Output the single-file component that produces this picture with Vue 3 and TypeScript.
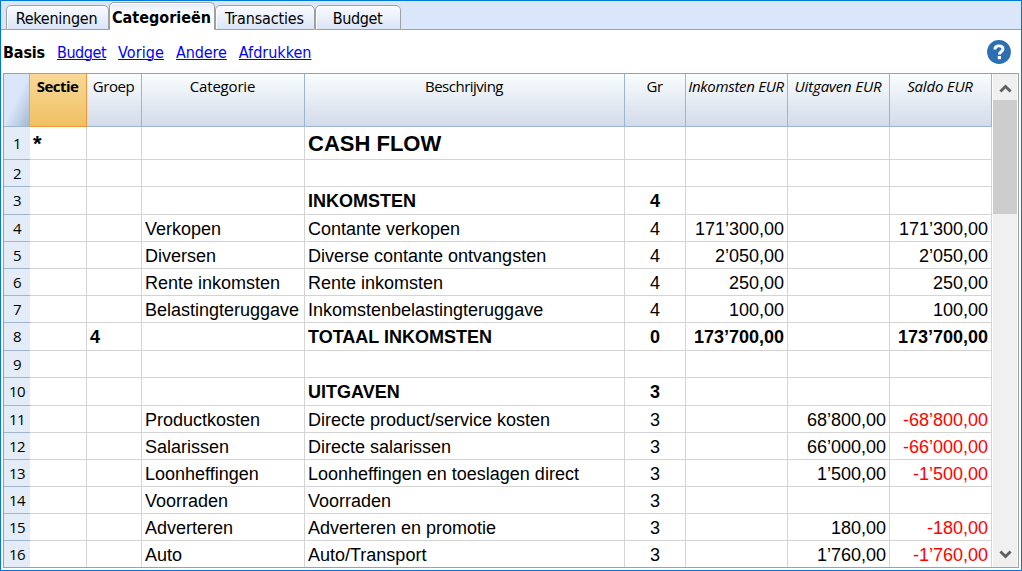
<script setup lang="ts">
interface Row {
  n: number
  kind?: 'title' | 'bold'
  tall?: boolean
  sectie?: string
  groep?: string
  cat?: string
  desc?: string
  gr?: string
  ink?: string
  uit?: string
  saldo?: string
}

const tabs = [
  { key: 'rekeningen', label: 'Rekeningen' },
  { key: 'categorieen', label: 'Categorieën', active: true },
  { key: 'transacties', label: 'Transacties' },
  { key: 'budget', label: 'Budget' },
]

const views = [
  { key: 'l-budget', label: 'Budget' },
  { key: 'l-vorige', label: 'Vorige' },
  { key: 'l-andere', label: 'Andere' },
  { key: 'l-afdrukken', label: 'Afdrukken' },
]

const columns = [
  { key: 'c-sectie', label: 'Sectie' },
  { key: 'c-groep', label: 'Groep' },
  { key: 'c-cat', label: 'Categorie' },
  { key: 'c-desc', label: 'Beschrijving' },
  { key: 'c-gr', label: 'Gr' },
  { key: 'c-ink', label: 'Inkomsten EUR' },
  { key: 'c-uit', label: 'Uitgaven EUR' },
  { key: 'c-saldo', label: 'Saldo EUR' },
]

const rows: Row[] = [
  { n: 1, kind: 'title', sectie: '*', desc: 'CASH FLOW' },
  { n: 2 },
  { n: 3, kind: 'bold', tall: true, desc: 'INKOMSTEN', gr: '4' },
  { n: 4, cat: 'Verkopen', desc: 'Contante verkopen', gr: '4', ink: '171’300,00', saldo: '171’300,00' },
  { n: 5, cat: 'Diversen', desc: 'Diverse contante ontvangsten', gr: '4', ink: '2’050,00', saldo: '2’050,00' },
  { n: 6, cat: 'Rente inkomsten', desc: 'Rente inkomsten', gr: '4', ink: '250,00', saldo: '250,00' },
  { n: 7, cat: 'Belastingteruggave', desc: 'Inkomstenbelastingteruggave', gr: '4', ink: '100,00', saldo: '100,00' },
  { n: 8, kind: 'bold', tall: true, groep: '4', desc: 'TOTAAL INKOMSTEN', gr: '0', ink: '173’700,00', saldo: '173’700,00' },
  { n: 9 },
  { n: 10, kind: 'bold', tall: true, desc: 'UITGAVEN', gr: '3' },
  { n: 11, cat: 'Productkosten', desc: 'Directe product/service kosten', gr: '3', uit: '68’800,00', saldo: '-68’800,00' },
  { n: 12, cat: 'Salarissen', desc: 'Directe salarissen', gr: '3', uit: '66’000,00', saldo: '-66’000,00' },
  { n: 13, cat: 'Loonheffingen', desc: 'Loonheffingen en toeslagen direct', gr: '3', uit: '1’500,00', saldo: '-1’500,00' },
  { n: 14, cat: 'Voorraden', desc: 'Voorraden', gr: '3' },
  { n: 15, cat: 'Adverteren', desc: 'Adverteren en promotie', gr: '3', uit: '180,00', saldo: '-180,00' },
  { n: 16, cat: 'Auto', desc: 'Auto/Transport', gr: '3', uit: '1’760,00', saldo: '-1’760,00' },
]
</script>

<template>
  <div class="window">
    <nav class="tabs">
      <div v-for="t in tabs" :key="t.key" class="tab" :class="[t.key, { active: t.active }]">
        <span>{{ t.label }}</span>
      </div>
      <div class="rest"></div>
    </nav>

    <div class="views">
      <b>Basis</b>
      <a v-for="v in views" :key="v.key" :class="v.key">{{ v.label }}</a>
      <svg class="help" width="24" height="24" viewBox="0 0 24 24">
        <circle cx="12" cy="12" r="11.9" fill="#2c6fb3" />
        <path d="M7.9 9.4C7.9 6.9 9.7 5.9 12 5.9s4 1.1 4 3.1c0 2.7-3.6 2.8-3.6 5.4" fill="none" stroke="#fff" stroke-width="2.9" />
        <rect x="10.8" y="16" width="3.2" height="3.2" fill="#fff" />
      </svg>
    </div>

    <div class="sheet">
      <div class="grid">
        <div class="row head">
          <div class="corner"></div>
          <div v-for="c in columns" :key="c.key" class="th" :class="c.key"><span>{{ c.label }}</span></div>
        </div>
        <div v-for="r in rows" :key="r.n" class="row" :class="[r.kind, { tall: r.tall }]">
          <div class="num"><span>{{ r.n }}</span></div>
          <div class="td">{{ r.sectie }}</div>
          <div class="td">{{ r.groep }}</div>
          <div class="td">{{ r.cat }}</div>
          <div class="td">{{ r.desc }}</div>
          <div class="td center">{{ r.gr }}</div>
          <div class="td amount">{{ r.ink }}</div>
          <div class="td amount">{{ r.uit }}</div>
          <div class="td amount" :class="{ neg: r.saldo?.startsWith('-') }">{{ r.saldo }}</div>
        </div>
      </div>
      <div class="scroll">
        <svg class="arrow" width="24" height="26" viewBox="0 0 24 26">
          <path d="M7.4 17.6 12.5 12.5 17.6 17.6" fill="none" stroke="#606060" stroke-width="2.8" />
        </svg>
        <div class="thumb"></div>
        <svg class="arrow down" width="24" height="26" viewBox="0 0 24 26">
          <path d="M7.4 10.4 12.5 15.5 17.6 10.4" fill="none" stroke="#606060" stroke-width="2.8" />
        </svg>
      </div>
    </div>
  </div>
</template>

<style>
body {
  margin: 0;
  overflow: hidden;
}
</style>

<style scoped>
.window {
  box-sizing: border-box;
  width: 1022px;
  height: 571px;
  border: 1px solid #0078d7;
  background: #fff;
  color: #000;
  display: flex;
  flex-direction: column;
}
.tabs {
  height: 29px;
  flex: none;
  display: flex;
  align-items: flex-end;
  background: linear-gradient(#dae6fa, #dae6fa) no-repeat 0 0 / 100% 28px;
  font: 16px/23px "DejaVu Sans Condensed", Tahoma, sans-serif;
}
.tabs::before {
  content: "";
  width: 5px;
  height: 1px;
  background: #a0a0a0;
}
.tab {
  box-sizing: border-box;
  height: 25px;
  border: 1px solid #a0a0a0;
  border-radius: 5px 5px 0 0;
  background: linear-gradient(#fafbfe, #dae5f8);
  box-shadow: inset 1px 1px 0 #fff;
  display: flex;
  justify-content: center;
  white-space: nowrap;
  line-height: 26px;
}
.tab.active {
  height: 28px;
  border-bottom: 0;
  background: linear-gradient(#e4ecfa, #fff 45%);
  font-weight: bold;
  line-height: 29px;
}
.rekeningen {
  width: 103px;
  padding-right: 2px;
  letter-spacing: -0.25px;
}
.categorieen {
  width: 106px;
  padding-right: 1px;
}
.transacties {
  width: 100px;
  padding-right: 1px;
  letter-spacing: -0.15px;
}
.budget {
  width: 86px;
  padding-right: 1px;
  letter-spacing: -0.35px;
}
.rest {
  flex: 1;
  height: 1px;
  background: #a0a0a0;
}
.views {
  height: 43px;
  flex: none;
  box-sizing: border-box;
  padding: 0 10px 0 2px;
  display: flex;
  align-items: center;
  font: 16px/20px "DejaVu Sans Condensed", Tahoma, sans-serif;
}
.views b {
  width: 54px;
  padding-top: 2px;
  letter-spacing: -0.15px;
}
.views a {
  padding-top: 2px;
  color: #0000ff;
  text-decoration: underline;
  text-underline-offset: 1px;
  text-decoration-thickness: 1px;
  margin-right: 12px;
}
.l-budget { letter-spacing: -0.45px; }
.l-vorige { letter-spacing: 0.1px; }
.l-andere { letter-spacing: -0.1px; }
.help { margin-left: auto; }
.sheet {
  box-sizing: border-box;
  margin-left: 2px;
  width: 1016px;
  height: 495px;
  border: 1px solid #a0a0a0;
  display: flex;
  overflow: hidden;
}
.grid {
  width: 988px;
  flex: none;
  overflow: hidden;
}
.row {
  display: grid;
  grid-template-columns: 26px 57px 55px 163px 320px 61px 102px 102px 102px;
  grid-template-rows: 100%;
  height: 27px;
}
.row.tall { height: 28px; }
.row.title { height: 33px; }
.row.head { height: 53px; }
.corner {
  border-right: 1px solid #9fb6d0;
  border-bottom: 1px solid #9fb6d0;
  background: linear-gradient(117deg, #dae6f9 50%, #a3b8d3 100%);
}
.th {
  border-right: 1px solid #9db6d0;
  border-bottom: 1px solid #9db6d0;
  background: linear-gradient(#f9fdfe, #d3dbea);
  font: 15px/20px "Open Sans", "Segoe UI", sans-serif;
  padding: 2px 1px 0 0;
  display: flex;
  justify-content: center;
  white-space: nowrap;
}
.c-sectie {
  font-weight: bold;
  letter-spacing: -0.55px;
  background: linear-gradient(#f8d898, #f0c163);
  border-color: #f29536;
}
.c-groep { letter-spacing: -0.4px; }
.c-cat { letter-spacing: -0.2px; }
.c-desc { letter-spacing: -0.5px; }
.c-gr { letter-spacing: -0.6px; }
.c-ink {
  letter-spacing: -0.3px;
  font-style: italic;
}
.c-uit {
  letter-spacing: -0.15px;
  font-style: italic;
}
.c-saldo {
  letter-spacing: -0.2px;
  font-style: italic;
}
.num {
  background: #e4ecf7;
  border-bottom: 1px solid #9fb6d0;
  font: 15px/26px "Open Sans", "Segoe UI", sans-serif;
  letter-spacing: -0.6px;
  text-align: center;
  min-height: 0;
}
.tall .num { line-height: 27px; }
.title .num { line-height: 32px; }
.td {
  border-right: 1px solid #d4d4d4;
  border-bottom: 1px solid #d4d4d4;
  padding: 0 3px;
  font: 18px/28px "Liberation Sans", Arial, sans-serif;
  white-space: nowrap;
  min-width: 0;
  min-height: 0;
}
.bold .td { font-weight: bold; }
.title .td {
  font-weight: bold;
  font-size: 22px;
  line-height: 33px;
}
.center { text-align: center; }
.amount { text-align: right; }
.neg { color: #ff0000; }
.scroll {
  margin-left: 1px;
  width: 24px;
  background: #f0f0f0;
  display: flex;
  flex-direction: column;
}
.thumb {
  height: 114px;
  background: #cdcdcd;
}
.arrow {
  display: block;
  flex: none;
}
.down { margin-top: auto; }
</style>
